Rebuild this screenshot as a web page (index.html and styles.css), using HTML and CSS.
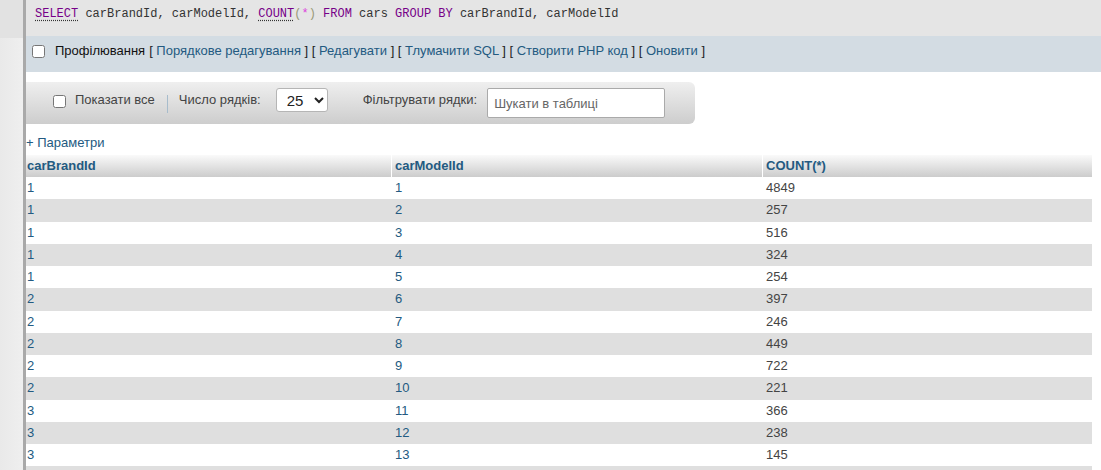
FILE: index.html
```html
<!DOCTYPE html>
<html lang="uk">
<head>
<meta charset="utf-8">
<title>phpMyAdmin</title>
<link rel="stylesheet" href="styles.css">
</head>
<body>
<div class="app">
  <aside class="nav">
    <div class="nav-top"></div>
    <div class="nav-rest"></div>
  </aside>
  <main class="content">
    <div class="sql"><code><a class="kw doc">SELECT</a> carBrandId, carModelId, <a class="kw doc">COUNT</a><span class="br">(</span><span class="op">*</span><span class="br">)</span> <span class="kw">FROM</span> cars <span class="kw">GROUP BY</span> carBrandId, carModelId</code></div>
    <div class="profiling">
      <input type="checkbox" class="chk">
      <span class="prof-label">Профілювання</span>
      <span class="links">[ <a>Порядкове редагування</a> ] [ <a>Редагувати</a> ] [ <a>Тлумачити SQL</a> ] [ <a>Створити PHP код</a> ] [ <a>Оновити</a> ]</span>
    </div>
    <div class="toolbar">
      <input type="checkbox" class="chk tb-chk">
      <span class="tb-text show-all">Показати все</span>
      <span class="tb-sep"></span>
      <span class="tb-text rows-label">Число рядків:</span>
      <select class="tb-select"><option>25</option></select>
      <span class="tb-text filter-label">Фільтрувати рядки:</span>
      <input type="text" class="tb-input" placeholder="Шукати в таблиці">
    </div>
    <div class="params"><a>+ Параметри</a></div>
    <table class="results">
      <colgroup>
        <col class="c1"><col class="c2"><col class="c3">
      </colgroup>
      <thead>
        <tr><th>carBrandId</th><th>carModelId</th><th>COUNT(*)</th></tr>
      </thead>
      <tbody>
        <tr><td class="lnk">1</td><td class="lnk">1</td><td>4849</td></tr>
        <tr><td class="lnk">1</td><td class="lnk">2</td><td>257</td></tr>
        <tr><td class="lnk">1</td><td class="lnk">3</td><td>516</td></tr>
        <tr><td class="lnk">1</td><td class="lnk">4</td><td>324</td></tr>
        <tr><td class="lnk">1</td><td class="lnk">5</td><td>254</td></tr>
        <tr><td class="lnk">2</td><td class="lnk">6</td><td>397</td></tr>
        <tr><td class="lnk">2</td><td class="lnk">7</td><td>246</td></tr>
        <tr><td class="lnk">2</td><td class="lnk">8</td><td>449</td></tr>
        <tr><td class="lnk">2</td><td class="lnk">9</td><td>722</td></tr>
        <tr><td class="lnk">2</td><td class="lnk">10</td><td>221</td></tr>
        <tr><td class="lnk">3</td><td class="lnk">11</td><td>366</td></tr>
        <tr><td class="lnk">3</td><td class="lnk">12</td><td>238</td></tr>
        <tr><td class="lnk">3</td><td class="lnk">13</td><td>145</td></tr>
        <tr><td class="lnk"></td><td class="lnk"></td><td></td></tr>
      </tbody>
    </table>
  </main>
</div>
</body>
</html>
```
FILE: styles.css
```css
html, body {
  margin: 0;
  padding: 0;
  background: #fff;
  height: 470px;
  overflow: hidden;
}

body {
  font-family: "Liberation Sans", Arial, sans-serif;
  font-size: 13px;
  color: #444;
}

a {
  color: #235a81;
  text-decoration: none;
}

.app {
  display: flex;
  height: 470px;
}

.nav {
  width: 23px;
  flex: none;
  display: flex;
  flex-direction: column;
  border-right: 3px solid #a9a9a9;
}

.nav-top {
  height: 38px;
  flex: none;
  background: #e2e2e2;
}

.nav-rest {
  flex: 1;
  background: linear-gradient(to right, #e9e9e9, #efefef);
}

.content {
  flex: 1;
  display: flex;
  flex-direction: column;
  min-width: 0;
  overflow: hidden;
}

.content > * {
  flex: none;
}

.sql {
  height: 36px;
  box-sizing: border-box;
  background: #e5e5e5;
  padding: 5px 0 0 9px;
  line-height: 16px;
}

.sql code {
  font-family: "Liberation Mono", "Courier New", monospace;
  font-size: 12px;
  color: #333;
}

.sql .kw {
  color: #770088;
}

.sql .doc {
  text-decoration: underline dotted #333;
  text-underline-offset: 3px;
}

.sql .br {
  color: #999977;
}

.sql .op {
  color: #dd44dd;
}

.profiling {
  height: 36px;
  box-sizing: border-box;
  background: #d3dce3;
  display: flex;
  align-items: flex-start;
  padding: 7px 0 0 6px;
  line-height: 16px;
  color: #222;
}

.chk {
  width: 13px;
  height: 13px;
  margin: 0;
  flex: none;
}

.profiling .chk {
  margin-top: 1.5px;
}

.prof-label {
  margin-left: 10px;
  color: #111;
}

.links {
  margin-left: 4px;
  white-space: pre;
  color: #222;
}

.toolbar {
  margin-top: 10px;
  width: 669px;
  height: 42px;
  box-sizing: border-box;
  padding: 6px 0 0 27px;
  display: flex;
  align-items: flex-start;
  background: linear-gradient(#efefef, #cdcdcd);
  border-radius: 0 6px 6px 0;
}

.tb-chk {
  margin-top: 7px;
}

.tb-text {
  line-height: 24px;
  color: #444;
  white-space: nowrap;
}

.show-all {
  margin-left: 9px;
}

.tb-sep {
  width: 1px;
  height: 18px;
  margin: 7px 0 0 12px;
  background: #a7bccc;
}

.rows-label {
  margin-left: 11px;
}

.tb-select {
  margin-left: 15px;
  width: 52px;
  height: 24px;
  font-family: "Liberation Sans", Arial, sans-serif;
  font-size: 15px;
  color: #222;
  border: 1px solid #b5b5b5;
  border-radius: 3px;
  background-color: #fff;
  padding: 0 0 0 6px;
}

.filter-label {
  margin-left: 35px;
}

.tb-input {
  margin-left: 10px;
  width: 178px;
  height: 30px;
  box-sizing: border-box;
  border: 1px solid #aaa;
  border-radius: 2px;
  padding: 0 6px;
  font-family: "Liberation Sans", Arial, sans-serif;
  font-size: 13px;
  color: #333;
  background: #fff;
}

.tb-input::placeholder {
  color: #666;
}

.params {
  margin: 11px 0 0 0;
  line-height: 16px;
}

.results {
  margin-top: 4px;
  width: 1066px;
  table-layout: fixed;
  border-collapse: separate;
  border-spacing: 0;
}

.results col.c1 { width: 366px; }
.results col.c2 { width: 371px; }
.results col.c3 { width: 329px; }

.results th {
  height: 22px;
  box-sizing: border-box;
  padding: 0 3px;
  text-align: left;
  font-weight: bold;
  color: #235a81;
  background: linear-gradient(#fafafa, #cccccc);
  border-right: 1px solid #fff;
  line-height: 22px;
}

.results th:last-child {
  border-right: 0;
}

.results td {
  padding: 0 3px;
  line-height: 22.25px;
  height: 22.25px;
  color: #444;
  white-space: nowrap;
}

.results td:first-child,
.results th:first-child {
  padding-left: 1px;
}

.results td.lnk {
  color: #235a81;
}

.results tbody tr:nth-child(odd) td {
  background: #fff;
}

.results tbody tr:nth-child(even) td {
  background: #dfdfdf;
}
```
